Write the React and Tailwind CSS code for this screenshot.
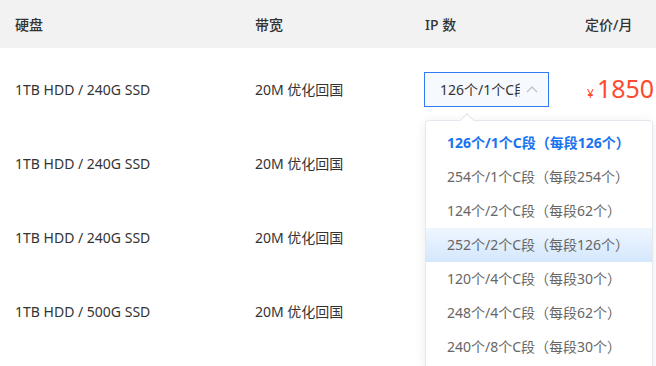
import { useState } from "react";

const ROWS = [
  { disk: "1TB HDD / 240G SSD", bw: "20M 优化回国", price: "1850" },
  { disk: "1TB HDD / 240G SSD", bw: "20M 优化回国" },
  { disk: "1TB HDD / 240G SSD", bw: "20M 优化回国" },
  { disk: "1TB HDD / 500G SSD", bw: "20M 优化回国" },
];

const IP_OPTIONS = [
  "126个/1个C段（每段126个）",
  "254个/1个C段（每段254个）",
  "124个/2个C段（每段62个）",
  "252个/2个C段（每段126个）",
  "120个/4个C段（每段30个）",
  "248个/4个C段（每段62个）",
  "240个/8个C段（每段30个）",
];

function IpSelect() {
  const [selected, setSelected] = useState(0);
  const [hover, setHover] = useState(3);

  return (
    <div className="relative">
      <div className="flex items-center w-[125px] h-[35px] border border-[#2f7cf6] bg-[#f6f9fe] pl-[15px] pr-[10px]">
        <span className="w-[80px] overflow-hidden whitespace-nowrap text-[14px] text-[#333]">{IP_OPTIONS[selected].split("（")[0]}</span>
        <svg width="12" height="7" viewBox="0 0 12 7" className="ml-auto" fill="none" stroke="#c0c4cc" strokeWidth="1.3">
          <path d="M1 6l5-5 5 5" />
        </svg>
      </div>

      {/* Dropdown */}
      <div className="absolute left-[1px] top-[48px] z-10 w-[228px] bg-white border border-[#e4e7ed] rounded-[4px] shadow-[0_2px_12px_rgba(0,0,0,0.08)] pt-[5px] pb-[6px]">
        <div className="absolute -top-[6px] left-[36px] w-[10px] h-[10px] bg-white border-l border-t border-[#e4e7ed] rotate-45" />
        {IP_OPTIONS.map((o, i) => (
          <div
            key={o}
            onClick={() => setSelected(i)}
            onMouseEnter={() => setHover(i)}
            className={`relative h-[34px] flex items-center pl-[21px] text-[14px] whitespace-nowrap cursor-pointer ${
              i === selected ? "text-[#1a73f0] font-bold" : "text-[#666]"
            } ${i === hover ? "bg-gradient-to-b from-[#eef6fe] to-[#d4e7fd]" : ""}`}
          >
            {o}
          </div>
        ))}
      </div>
    </div>
  );
}

export default function App() {
  return (
    <div className="w-[656px] h-[366px] overflow-hidden bg-white" style={{ fontFamily: '"Noto Sans", "Noto Sans CJK SC", sans-serif' }}>
      {/* Header */}
      <div className="grid grid-cols-[240px_170px_160px_1fr] items-center h-[48px] bg-[#f2f2f2] pl-[15px] text-[14px] font-medium text-[#333]">
        <div>硬盘</div>
        <div>带宽</div>
        <div>IP 数</div>
        <div>定价/月</div>
      </div>

      <div className="pt-[4px]">
        {ROWS.map((r, i) => (
          <div key={i} className="grid grid-cols-[240px_170px_160px_1fr] items-center h-[74px] pl-[15px] text-[14px] text-[#333]">
            <div>{r.disk}</div>
            <div>{r.bw}</div>
            <div className="-ml-[1px]">{i === 0 && <IpSelect />}</div>
            <div>
              {r.price && (
                <span className="flex items-baseline text-[#fd4a2c] pl-[2px] whitespace-nowrap">
                  <span className="text-[12px] mr-[3px]">¥</span>
                  <span className="text-[25px] leading-none">{r.price}</span>
                </span>
              )}
            </div>
          </div>
        ))}
      </div>
    </div>
  );
}
